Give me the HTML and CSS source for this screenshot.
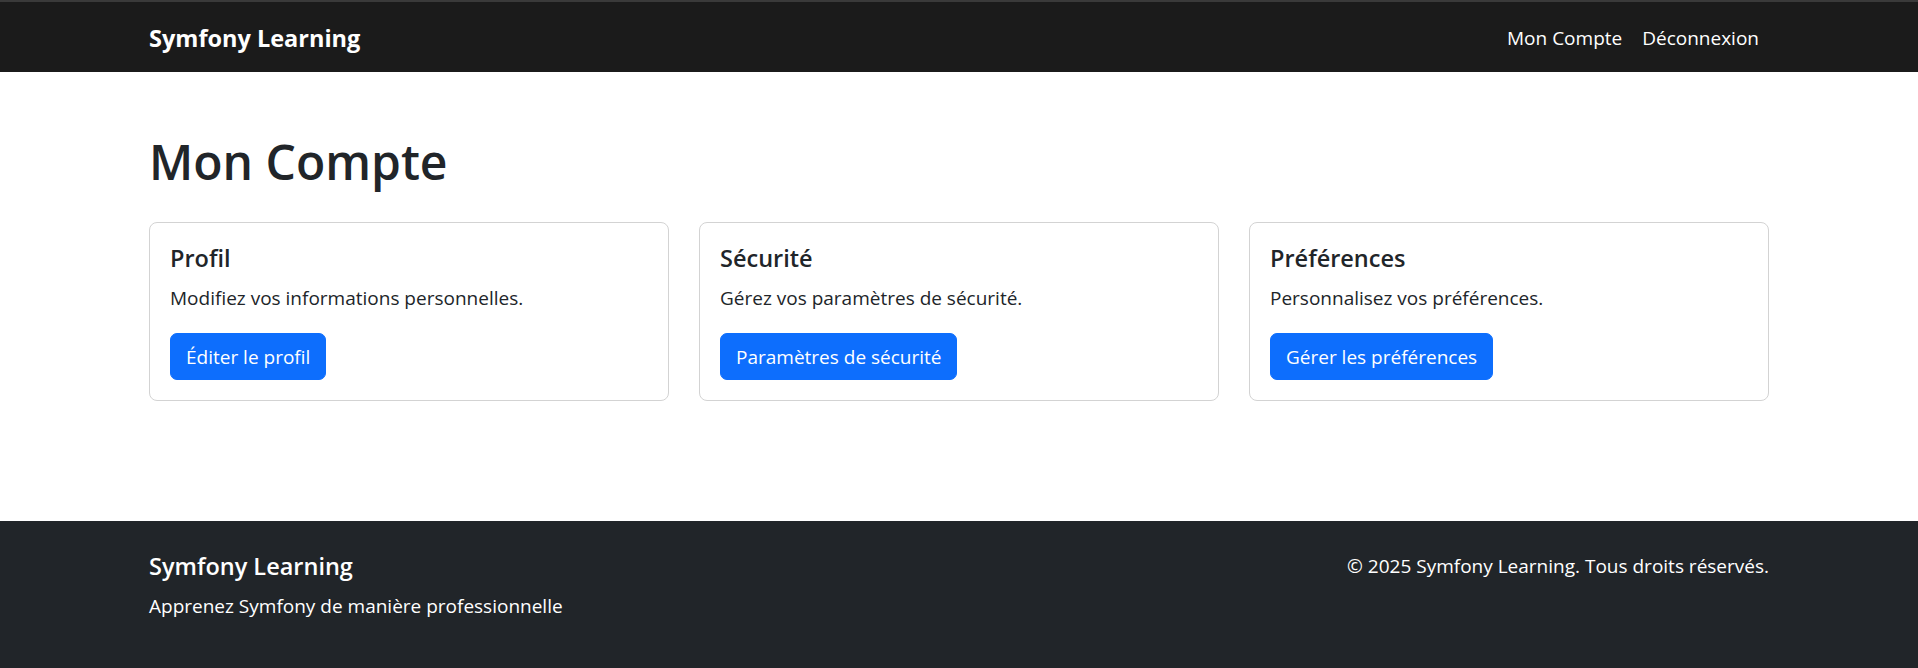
FILE: index.html
```html
<!DOCTYPE html>
<html lang="fr">
<head>
<meta charset="utf-8">
<title>Mon Compte - Symfony Learning</title>
<link rel="stylesheet" href="styles.css">
</head>
<body>
<nav class="navbar">
  <div class="container nav-inner">
    <a class="brand" href="#">Symfony Learning</a>
    <ul class="nav-links">
      <li><a href="#">Mon Compte</a></li>
      <li><a href="#">Déconnexion</a></li>
    </ul>
  </div>
</nav>
<main class="container main">
  <h1 class="page-title">Mon Compte</h1>
  <div class="cards">
    <div class="card">
      <h5 class="card-title">Profil</h5>
      <p class="card-text">Modifiez vos informations personnelles.</p>
      <a class="btn" href="#">Éditer le profil</a>
    </div>
    <div class="card">
      <h5 class="card-title">Sécurité</h5>
      <p class="card-text">Gérez vos paramètres de sécurité.</p>
      <a class="btn" href="#">Paramètres de sécurité</a>
    </div>
    <div class="card">
      <h5 class="card-title">Préférences</h5>
      <p class="card-text">Personnalisez vos préférences.</p>
      <a class="btn" href="#">Gérer les préférences</a>
    </div>
  </div>
</main>
<footer class="footer">
  <div class="container footer-inner">
    <div class="footer-left">
      <h5 class="footer-title">Symfony Learning</h5>
      <p class="footer-text">Apprenez Symfony de manière professionnelle</p>
    </div>
    <div class="footer-right">
      <p class="footer-text">© 2025 Symfony Learning. Tous droits réservés.</p>
    </div>
  </div>
</footer>
</body>
</html>
```

FILE: styles.css
```css
* { box-sizing: border-box; }
html, body { margin: 0; padding: 0; }
body {
  font-family: "Open Sans", "Noto Sans", sans-serif;
  font-size: 19px;
  line-height: 30px;
  color: #212529;
  background: #fff;
}
a { text-decoration: none; }
.container {
  width: 1620px;
  margin: 0 auto;
}
.navbar {
  background: #1b1b1b;
  border-top: 2px solid #3a3a3a;
  height: 72px;
}
.nav-inner {
  height: 70px;
  display: flex;
  align-items: center;
  justify-content: space-between;
}
.brand {
  color: #fff;
  font-weight: 700;
  font-size: 23.5px;
  line-height: 37px;
  margin-top: 2px;
}
.nav-links {
  list-style: none;
  margin: 2px 0 0;
  padding: 0;
  display: flex;
}
.nav-links a {
  display: block;
  color: #fff;
  padding: 10px 10px;
  font-size: 19px;
  line-height: 30px;
}
.main {
  padding-top: 60px;
  padding-bottom: 60px;
}
.page-title {
  margin: 0 0 30px;
  font-size: 48px;
  line-height: 60px;
  font-weight: 600;
}
.cards {
  display: grid;
  grid-template-columns: repeat(3, 1fr);
  gap: 30px;
}
.card {
  border: 1px solid #d3d3d3;
  border-radius: 8px;
  padding: 20px;
}
.card-title {
  margin: 0 0 10px;
  font-size: 23.5px;
  line-height: 30px;
  font-weight: 600;
}
.card-text {
  margin: 0 0 20px;
}
.btn {
  display: inline-block;
  background: #0d6efd;
  color: #fff;
  border: 1px solid #0d6efd;
  border-radius: 7px;
  padding: 7.5px 15px;
  font-size: 19px;
  line-height: 30px;
}
.footer {
  background: #212529;
  color: #fff;
  margin-top: 60px;
  padding: 30px 0;
}
.footer-inner {
  display: flex;
  justify-content: space-between;
}
.footer-title {
  margin: 0 0 10px;
  font-size: 23.5px;
  line-height: 30px;
  font-weight: 600;
}
.footer-text {
  margin: 0 0 20px;
}
```
